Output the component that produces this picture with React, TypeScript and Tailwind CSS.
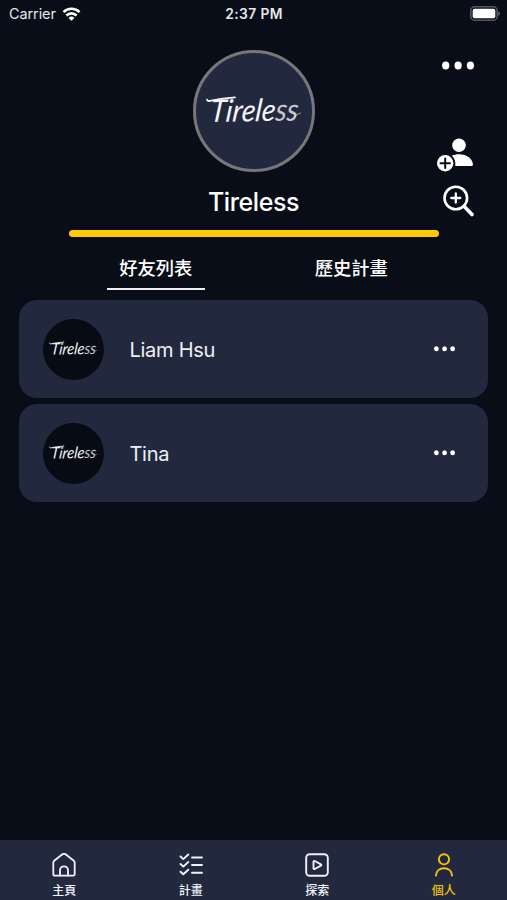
import React, { useState } from 'react';

interface Friend {
  id: number;
  name: string;
}

interface IconProps {
  className?: string;
}

const friends: Friend[] = [
  { id: 1, name: 'Liam Hsu' },
  { id: 2, name: 'Tina' },
];

const WifiIcon = ({ className }: IconProps) => (
  <svg viewBox="0 0 18 14" className={className} fill="none" stroke="currentColor" strokeWidth="2.6">
    <path d="M1 5.1a11.4 11.4 0 0 1 16 0" />
    <path d="M3.9 8.5a7.2 7.2 0 0 1 10.2 0" />
    <path d="M9 13.8 6.1 10.9a4.1 4.1 0 0 1 5.8 0z" fill="currentColor" stroke="none" />
  </svg>
);

const BatteryIcon = ({ className }: IconProps) => (
  <svg viewBox="0 0 31 15" className={className}>
    <rect x="0.8" y="0.8" width="26.4" height="13.4" rx="4" fill="none" stroke="#55565d" strokeWidth="1.6" />
    <rect x="2.7" y="2.8" width="22.6" height="9.4" rx="2" fill="#fff" />
    <path d="M28.3 5.2c2.2.8 2.2 3.8 0 4.6z" fill="#66676d" />
  </svg>
);

const DotsIcon = ({ className }: IconProps) => (
  <svg viewBox="0 0 32 8" className={className} fill="currentColor">
    <ellipse cx="3.7" cy="4" rx="3.6" ry="3.9" />
    <ellipse cx="16.1" cy="4" rx="3.6" ry="3.9" />
    <ellipse cx="28.4" cy="4" rx="3.6" ry="3.9" />
  </svg>
);

const AddFriendIcon = ({ className }: IconProps) => (
  <svg viewBox="0 0 36 34" className={className} fill="currentColor">
    <circle cx="22" cy="7.2" r="6.8" />
    <path d="M14.9 17.8c2-1 4.4-1.5 7.1-1.5 8 0 13.6 4.7 13.9 10.1.1.9-.5 1.5-1.4 1.5H18.3c.4-4.2-.6-7.7-3.4-10.1z" />
    <circle cx="8.2" cy="25.2" r="8.2" />
    <path d="M8.2 20.5v9.4M3.5 25.2h9.4" stroke="#080d17" strokeWidth="2" strokeLinecap="round" />
  </svg>
);

const SearchPlusIcon = ({ className }: IconProps) => (
  <svg viewBox="0 0 32 32" className={className} fill="none" stroke="currentColor" strokeLinecap="round">
    <circle cx="12.8" cy="13" r="11.3" strokeWidth="2.6" />
    <path d="M12.8 8.5v9M8.3 13h9" strokeWidth="2.3" />
    <path d="m21 21.3 8 8.2" strokeWidth="3.6" />
  </svg>
);

const HomeIcon = ({ className }: IconProps) => (
  <svg viewBox="0 0 24 24" className={className} fill="none" stroke="currentColor" strokeWidth="1.8" strokeLinejoin="round" strokeLinecap="round">
    <path d="M1.3 9.7c0-.8.3-1.4.9-1.9l7.9-6.3a3 3 0 0 1 3.8 0l7.9 6.3c.6.5.9 1.1.9 1.9v11.5c0 .9-.6 1.5-1.5 1.5H2.8c-.9 0-1.5-.6-1.5-1.5z" />
    <path d="M8 22.5v-5.2a4 4 0 0 1 8 0v5.2" />
  </svg>
);

const ChecklistIcon = ({ className }: IconProps) => (
  <svg viewBox="0 0 24 24" className={className} fill="none" stroke="currentColor" strokeWidth="1.9" strokeLinejoin="round" strokeLinecap="round">
    <path d="m1.5 3.5 2.8 2.6L9.3 1.5" />
    <path d="m1.5 11 2.8 2.6L9.3 9" />
    <path d="m1.5 18.7 2.8 2.6 5-4.6" />
    <path d="M13 4.5h10M13 12h10M13 19.7h10" />
  </svg>
);

const PlayIcon = ({ className }: IconProps) => (
  <svg viewBox="0 0 24 24" className={className} fill="none" stroke="currentColor" strokeWidth="1.9" strokeLinejoin="round">
    <rect x="1.2" y="1.2" width="21.6" height="21.6" rx="3.5" />
    <path d="M8.5 8.8c0-.8.6-1.1 1.2-.8l6.2 3.3c.7.4.7 1 0 1.4l-6.2 3.3c-.6.3-1.2 0-1.2-.8z" />
  </svg>
);

const PersonIcon = ({ className }: IconProps) => (
  <svg viewBox="0 0 24 24" className={className} fill="none" stroke="currentColor" strokeWidth="1.9" strokeLinecap="round">
    <circle cx="12" cy="6.3" r="5.1" />
    <path d="M4 22.6c.2-4.5 3.4-7.4 8-7.4s7.8 2.9 8 7.4" />
  </svg>
);

// Brush style wordmark, the last letters fade out
const Wordmark = ({ className }: IconProps) => (
  <svg viewBox="0 0 96 34" overflow="visible" className={className} fill="#f4f5fa">
    <text
      transform="translate(3.5 28) rotate(-1) skewX(-7)"
      fontFamily="Lato"
      fontStyle="italic"
      fontSize="31"
      fontWeight="400"
      textLength="88"
      lengthAdjust="spacingAndGlyphs"
    >
      Tirele<tspan fillOpacity="0.8">ss</tspan>
    </text>
    <path d="M1 5.6c.5 1.3 1.4 1.7 3 1.3C12 5 20 4.3 29 3.4" fill="none" stroke="#f4f5fa" strokeWidth="1.8" strokeLinecap="round" />
    <path d="M85 25.500c3-3 6-5.500 10-6.500" fill="none" stroke="#f4f5fa" strokeWidth="0.9" strokeOpacity="0.6" />
  </svg>
);

const tabs = [
  { key: 'friends', label: '好友列表' },
  { key: 'history', label: '歷史計畫' },
];

const navItems = [
  { key: 'home', label: '主頁', Icon: HomeIcon },
  { key: 'plan', label: '計畫', Icon: ChecklistIcon },
  { key: 'explore', label: '探索', Icon: PlayIcon },
  { key: 'profile', label: '個人', Icon: PersonIcon },
];

export default function App() {
  const [activeTab, setActiveTab] = useState('friends');
  const [activeNav, setActiveNav] = useState('profile');

  return (
    <div className="flex flex-col w-full h-screen overflow-hidden bg-[#080d17] text-white font-['Inter','Noto_Sans_CJK_TC',sans-serif]">
      {/* Status Bar */}
      <div className="grid grid-cols-3 items-center h-[27px] shrink-0 pl-[9px] pr-[6px] text-[#e6e7eb]">
        <div className="flex items-center gap-[6px]">
          <span className="pt-[2px] text-[14.5px] leading-none tracking-[-0.1px]">Carrier</span>
          <WifiIcon className="w-[19px] h-[14px] text-white" />
        </div>
        <div className="pt-[2px] text-center text-[13.8px] leading-none font-semibold tracking-[0.4px] -ml-[2px]">2:37 PM</div>
        <BatteryIcon className="w-[31px] h-[15px] justify-self-end" />
      </div>

      {/* Profile Header */}
      <div className="grid grid-cols-[1fr_auto_1fr] h-[203px] shrink-0">
        <div></div>
        <div className="flex flex-col items-center pt-[23px]">
          <div className="flex items-center justify-center w-[122px] h-[122px] rounded-full bg-[#22293e] border-3 border-[#75777a]">
            <Wordmark className="w-[96px] h-[34px]" />
          </div>
          <h1 className="mt-[14px] text-[25px] leading-8 font-medium tracking-[-0.4px] whitespace-nowrap">Tireless</h1>
        </div>
        <div className="flex flex-col items-end pt-[34px] pr-[33px]">
          <button aria-label="More">
            <DotsIcon className="block w-8 h-[9px]" />
          </button>
          <button aria-label="Add friend" className="mt-[68px] pr-[1px]">
            <AddFriendIcon className="block w-9 h-[34px]" />
          </button>
          <button aria-label="Search" className="mt-[13px] -mr-px">
            <SearchPlusIcon className="block w-8 h-8" />
          </button>
        </div>
      </div>
      <div className="w-[370px] h-[7px] shrink-0 mx-auto rounded-full bg-[#fecb02]"></div>

      {/* Tabs */}
      <div className="flex h-[63.4px] shrink-0 px-[58px]">
        {tabs.map((tab) => (
          <button
            key={tab.key}
            onClick={() => setActiveTab(tab.key)}
            className="flex-1 flex flex-col items-center pt-[18px]"
          >
            <span className="text-[18.3px] leading-[27px] font-medium">{tab.label}</span>
            <span className={`mt-[6px] w-[98px] h-[2px] ${activeTab === tab.key ? 'bg-[#eef0f5]' : 'bg-transparent'}`}></span>
          </button>
        ))}
      </div>

      {/* Friend List */}
      <div className="flex-1 flex flex-col gap-[6.5px] pl-[19.4px] pr-[18.6px]">
        {friends.map((friend) => (
          <div key={friend.id} className="flex items-center h-[97.5px] pl-6 pr-[33px] rounded-[18px] bg-[#22293e]">
            <div className="flex items-center justify-center w-[61px] h-[61px] rounded-full bg-[#060b14]">
              <Wordmark className="w-[49px] h-[18px]" />
            </div>
            <span className="flex-1 pt-px ml-[25px] text-[20px] leading-7 tracking-[-0.25px] text-[#eef0f6]">{friend.name}</span>
            <button aria-label="More">
              <DotsIcon className="block w-[21px] h-[5.5px]" />
            </button>
          </div>
        ))}
      </div>

      {/* Bottom Navigation */}
      <nav className="flex h-[60px] shrink-0 pl-px bg-[#22293e]">
        {navItems.map(({ key, label, Icon }) => (
          <button
            key={key}
            onClick={() => setActiveNav(key)}
            className={`flex-1 flex flex-col items-center pt-[13px] ${activeNav === key ? 'text-[#f0c40f]' : 'text-[#f0f2f8]'}`}
          >
            <Icon className="w-6 h-6 shrink-0" />
            <span className="mt-[6px] text-[12px] leading-4 font-medium">{label}</span>
          </button>
        ))}
      </nav>
    </div>
  );
}
